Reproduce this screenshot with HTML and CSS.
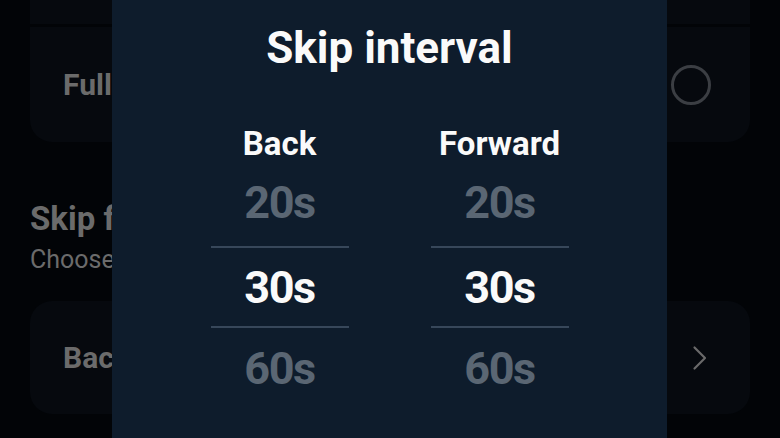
FILE: index.html
```html
<!DOCTYPE html>
<html>
<head>
<meta charset="utf-8">
<link rel="stylesheet" href="styles.css">
</head>
<body>
<div class="screen">
  <div class="settings">
    <div class="group">
      <div class="row row-top"></div>
      <div class="divider"></div>
      <div class="row row-main">
        <span class="row-label">Fullscreen</span>
        <span class="radio"></span>
      </div>
    </div>
    <div class="section">
      <div class="section-title">Skip forward and back</div>
      <div class="section-sub">Choose how far to skip</div>
    </div>
    <div class="group single">
      <div class="row row-main">
        <span class="row-label">Back 30s, Forward 30s</span>
        <svg class="chev" width="16" height="26" viewBox="0 0 16 26"><path d="M2.5 2.5 L13 13 L2.5 23.5" fill="none" stroke="#6a6a6a" stroke-width="2.2" stroke-linecap="round" stroke-linejoin="round"/></svg>
      </div>
    </div>
  </div>
  <div class="modal">
    <div class="modal-title">Skip interval</div>
    <div class="pickers">
      <div class="picker">
        <div class="picker-label">Back</div>
        <div class="opt dim first">20s</div>
        <div class="opt sel">30s</div>
        <div class="opt dim">60s</div>
      </div>
      <div class="picker">
        <div class="picker-label">Forward</div>
        <div class="opt dim first">20s</div>
        <div class="opt sel">30s</div>
        <div class="opt dim">60s</div>
      </div>
    </div>
  </div>
</div>
</body>
</html>
```

FILE: styles.css
```css
html, body {
  margin: 0;
  padding: 0;
  background: #020407;
}
.screen {
  position: relative;
  width: 780px;
  height: 438px;
  overflow: hidden;
  background: #020407;
  font-family: Roboto, "Liberation Sans", sans-serif;
}
.settings {
  padding: 0 30px;
  display: flex;
  flex-direction: column;
}
.group {
  background: #06090e;
  border-radius: 0 0 22px 22px;
  overflow: hidden;
}
.group.single {
  border-radius: 22px;
  margin-top: 24px;
}
.row-top {
  height: 24px;
}
.divider {
  height: 3px;
  background: #020407;
}
.row-main {
  height: 115px;
  display: flex;
  align-items: center;
  justify-content: space-between;
  padding: 0 39px 0 33px;
}
.group.single .row-main {
  height: 113px;
  padding-right: 42px;
}
.row-label {
  font-size: 30px;
  font-weight: 700;
  color: #6b6b6b;
  white-space: nowrap;
}
.radio {
  width: 34px;
  height: 34px;
  border: 3px solid #3b3e43;
  border-radius: 50%;
}
.section {
  padding-top: 57px;
  white-space: nowrap;
}
.section-title {
  font-size: 33px;
  font-weight: 700;
  color: #6b6b6b;
  line-height: 40px;
}
.section-sub {
  margin-top: 4px;
  font-size: 25px;
  color: #6b6b6b;
  line-height: 34px;
}
.modal {
  position: absolute;
  left: 112px;
  top: 0;
  width: 555px;
  height: 438px;
  background: #0e1c2c;
  display: flex;
  flex-direction: column;
  align-items: center;
}
.modal-title {
  margin-top: 24px;
  font-size: 44px;
  font-weight: 700;
  color: #fafafa;
  line-height: 48px;
}
.pickers {
  margin-top: 54px;
  display: flex;
  gap: 82px;
}
.picker {
  width: 138px;
  display: flex;
  flex-direction: column;
  align-items: stretch;
}
.picker-label {
  font-size: 33px;
  font-weight: 700;
  color: #fafafa;
  text-align: center;
  line-height: 36px;
}
.opt {
  box-sizing: border-box;
  height: 80px;
  display: flex;
  align-items: center;
  justify-content: center;
  font-size: 45px;
  font-weight: 700;
  letter-spacing: -1.5px;
}
.opt.first {
  height: 84px;
  padding-bottom: 3px;
}
.opt.dim {
  color: #5a6673;
}
.opt.sel {
  height: 82px;
  color: #fafafa;
  border-top: 2px solid #37475a;
  border-bottom: 2px solid #37475a;
}
```
